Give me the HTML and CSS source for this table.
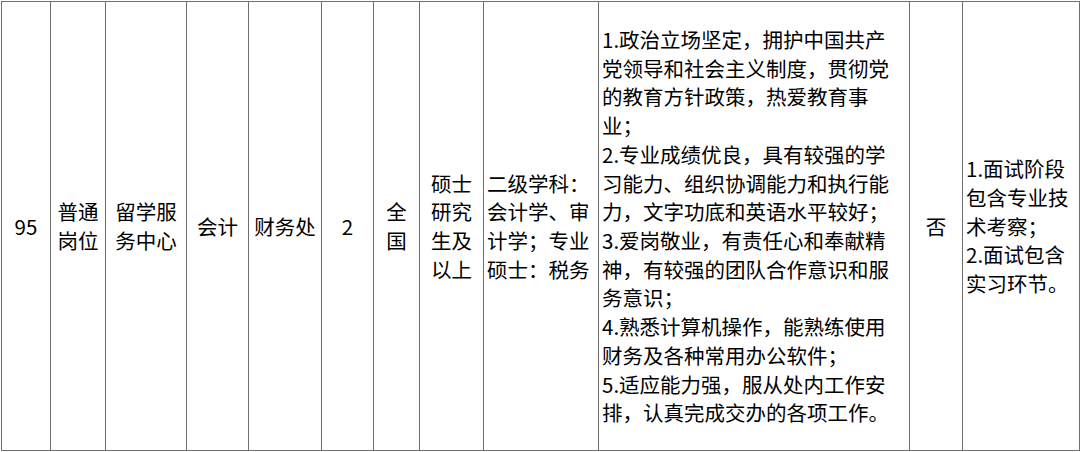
FILE: index.html
```html
<!DOCTYPE html>
<html lang="zh-CN">
<head>
<meta charset="utf-8">
<link rel="stylesheet" href="styles.css">
</head>
<body>
<div class="wrap">
<table class="jobs">
<colgroup>
<col class="c1"><col class="c2"><col class="c3"><col class="c4"><col class="c5"><col class="c6"><col class="c7"><col class="c8"><col class="c9"><col class="c10"><col class="c11"><col class="c12">
</colgroup>
<tbody>
<tr>
<td class="center">95</td>
<td class="center">普通<br>岗位</td>
<td class="center">留学服<br>务中心</td>
<td class="center">会计</td>
<td class="center">财务处</td>
<td class="center">2</td>
<td class="center">全<br>国</td>
<td class="center">硕士<br>研究<br>生及<br>以上</td>
<td class="left">二级学科：<br>会计学、审<br>计学；专业<br>硕士：税务</td>
<td class="left">1.政治立场坚定，拥护中国共产<br>党领导和社会主义制度，贯彻党<br>的教育方针政策，热爱教育事<br>业；<br>2.专业成绩优良，具有较强的学<br>习能力、组织协调能力和执行能<br>力，文字功底和英语水平较好；<br>3.爱岗敬业，有责任心和奉献精<br>神，有较强的团队合作意识和服<br>务意识；<br>4.熟悉计算机操作，能熟练使用<br>财务及各种常用办公软件；<br>5.适应能力强，服从处内工作安<br>排，认真完成交办的各项工作。</td>
<td class="center">否</td>
<td class="left">1.面试阶段<br>包含专业技<br>术考察；<br>2.面试包含<br>实习环节。</td>
</tr>
</tbody>
</table>
</div>
</body>
</html>
```

FILE: styles.css
```css
html, body {
  margin: 0;
  padding: 0;
  background: #ffffff;
}
.wrap {
  padding: 1px 0 0 1px;
}
.jobs {
  border-collapse: collapse;
  table-layout: fixed;
  width: 1079px;
  font-family: "Noto Sans CJK SC", "Noto Sans", sans-serif;
  font-size: 20.5px;
  line-height: 28.7px;
  color: #000;
}
.jobs td {
  border: 1px solid #6f6f6f;
  height: 448px;
  padding: 0;
  vertical-align: middle;
  white-space: nowrap;
  overflow: hidden;
}
.jobs td.center { text-align: center; }
.jobs td.left { text-align: left; padding-left: 3px; }
.c1 { width: 49px; }
.c2 { width: 55px; }
.c3 { width: 81px; }
.c4 { width: 62px; }
.c5 { width: 73px; }
.c6 { width: 52px; }
.c7 { width: 46px; }
.c8 { width: 64px; }
.c9 { width: 115px; }
.c10 { width: 311px; }
.c11 { width: 53px; }
.c12 { width: 117px; }
```
